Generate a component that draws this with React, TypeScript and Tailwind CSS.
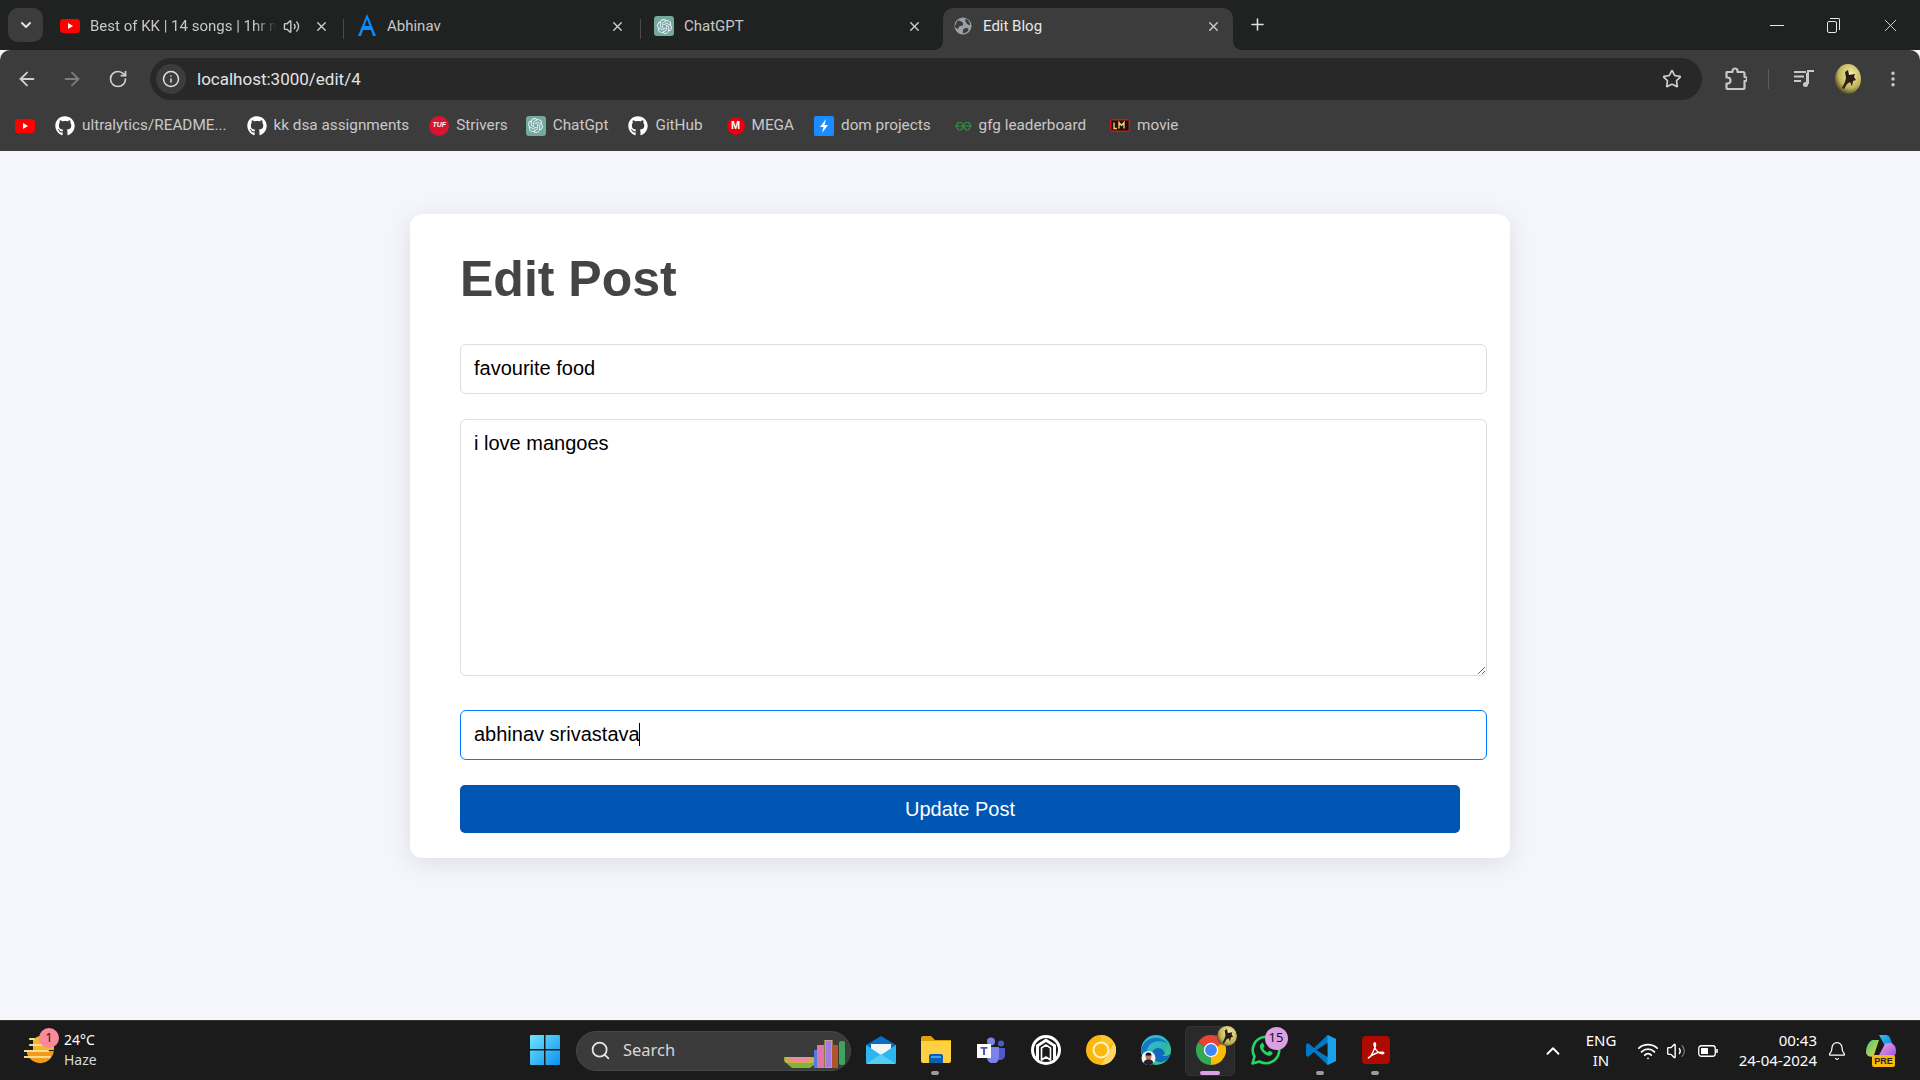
import { ArrowLeft, ArrowRight, RotateCw, Info, Star, EllipsisVertical, Volume1, Volume2, X, Plus, ChevronDown, Search, ChevronUp, Wifi, Bell } from "lucide-react";
import { FaGithub } from "react-icons/fa";
import { SiOpenai } from "react-icons/si";

const Yt = () => (
  <svg viewBox="0 0 20 14" className="w-5 h-[14px] shrink-0">
    <rect width="20" height="14" rx="3.5" fill="#f00" />
    <path d="M8 4l5 3-5 3z" fill="#fff" />
  </svg>
);
const Gpt = () => (
  <div className="w-5 h-5 shrink-0 rounded-[3px] bg-[#74aa9c] flex items-center justify-center text-[#eef]">
    <SiOpenai size={15} />
  </div>
);
const Gh = () => <FaGithub className="w-5 h-5 shrink-0 text-white" />;
const Tuf = () => (
  <div className="w-5 h-5 shrink-0 rounded-full bg-[#d8142f] flex items-center justify-center text-white text-[7px] font-bold italic [font-family:'Liberation_Sans',sans-serif]">TUF</div>
);
const Mega = () => (
  <div className="w-[18px] h-[18px] shrink-0 rounded-full bg-[#e8000f] flex items-center justify-center text-white text-[11px] font-bold [font-family:'Liberation_Sans',sans-serif]">M</div>
);
const Dom = () => (
  <svg viewBox="0 0 20 20" className="w-5 h-5 shrink-0">
    <rect width="20" height="20" rx="1.5" fill="#1a8cff" />
    <path d="M12 3L6 11h3.5L8 17l6-8h-3.5z" fill="#fff" />
  </svg>
);
const Gfg = () => (
  <svg viewBox="0 0 20 12" className="w-[17px] h-[12px] shrink-0" fill="none" stroke="#2f8d46" strokeWidth="1.4">
    <path d="M0 6h20M10 6C9 2 6 1 4 2S1 6 3 9s6 2 7-3zM10 6c1-4 4-5 6-4s3 4 1 7-6 2-7-3z" />
  </svg>
);
const Lm = () => (
  <svg viewBox="0 0 20 13" className="w-5 h-[13px] shrink-0">
    <rect x="0.7" y="0.7" width="18.6" height="11.6" rx="1.5" fill="#1a1208" stroke="#d0141c" strokeWidth="1.4" />
    <path d="M4 3.5v6h3M9 9.5v-6l2.5 3 2.5-3v6" fill="none" stroke="#f0d070" strokeWidth="1.4" />
  </svg>
);
const Avatar = ({ cls }: { cls: string }) => (
  <svg viewBox="0 0 26 30" preserveAspectRatio="xMidYMid slice" className={cls}>
    <defs>
      <radialGradient id="av" cx="0.6" cy="0.35" r="0.7">
        <stop offset="0" stopColor="#f5efa8" />
        <stop offset="0.65" stopColor="#c0b35a" />
        <stop offset="1" stopColor="#3f3a22" />
      </radialGradient>
    </defs>
    <ellipse cx="13" cy="15" rx="13" ry="15" fill="url(#av)" />
    <path d="M10 8l3-2 1 5 6-1-1 3 2 3-3 1-1 5-2-4-3 2-3 5-2-1 3-6 1-4z" fill="#2c1b16" />
  </svg>
);
const PuzzleIcon = () => (
  <svg viewBox="0 0 22 24" className="w-[22px] h-6 shrink-0" fill="none" stroke="#c8c8c8" strokeWidth="2.2" strokeLinejoin="round">
    <path d="M2 5h5.500V4a2.500 2.500 0 0 1 5 0v1H18a1.500 1.500 0 0 1 1.500 1.500V10h.5a2 2 0 0 1 0 4h-.5v6.500A1.500 1.500 0 0 1 18 22H3a1.500 1.500 0 0 1-1.500-1.500V16.500h1a3 3 0 0 0 0-6h-1V6A1 1 0 0 1 2 5z" />
  </svg>
);

function Tab({ icon, title, active, fade, audio }: { icon: React.ReactNode; title: string; active?: boolean; fade?: boolean; audio?: boolean }) {
  return (
    <div className={`relative h-[42px] shrink-0 flex items-center pb-[6px] rounded-t-[10px] ${active ? "w-[290px] ml-[4px] mr-[2px] pl-[10px] pr-[12px] bg-[#3c3c3c] text-[#e8e8e8]" : "w-[297px] pl-3 pr-[17px] text-[#c7c7c7]"}`}>
      {active && <div className="absolute -left-2 bottom-0 w-2 h-2 bg-[radial-gradient(circle_at_0_0,transparent_7.5px,#3c3c3c_8px)]" />}
      {active && <div className="absolute -right-2 bottom-0 w-2 h-2 bg-[radial-gradient(circle_at_100%_0,transparent_7.5px,#3c3c3c_8px)]" />}
      <div className="w-5 flex justify-center shrink-0">{icon}</div>
      <div className={`ml-[10px] flex-1 whitespace-nowrap text-[15px] ${fade ? "[mask-image:linear-gradient(to_right,black_88%,transparent)]" : ""}`}>{title}</div>
      {audio && <Volume2 size={17} className="mr-[14px] ml-[6px] shrink-0 text-[#c7c7c7]" />}
      <X size={15} strokeWidth={2.2} className="shrink-0 text-[#d0d0d0]" />
    </div>
  );
}
const Sep = () => <div className="w-px h-5 bg-[#4a4a4a] shrink-0 -mx-px relative left-[-1px]" />;

function Bm({ icon, label, cls = "" }: { icon: React.ReactNode; label: string; cls?: string }) {
  return (
    <div className={`flex items-center gap-[7px] shrink-0 ${cls}`}>
      {icon}
      <span className="text-[15.3px] text-[#c9c9c9] whitespace-nowrap">{label}</span>
    </div>
  );
}

const Slot = ({ children, dot, active }: { children?: React.ReactNode; dot?: boolean; active?: boolean }) => (
  <div className="relative w-[55px] h-[60px] flex items-center justify-center shrink-0">
    {active && <div className="absolute left-[2px] top-[5px] w-[50px] h-[50px] rounded-[5px] bg-[#2a2a2a] border border-[#333]" />}
    <div className="relative -mt-[2px]">{children}</div>
    {dot && <div className="absolute bottom-[6px] left-[23px] w-2 h-[4px] rounded-full bg-[#9b9b9b]" />}
    {active && <div className="absolute bottom-[6px] left-[17px] w-5 h-[4px] rounded-full bg-[#dca0e4]" />}
  </div>
);

const WinLogo = () => (
  <svg viewBox="0 0 30 30" className="w-[30px] h-[30px]">
    <defs>
      <linearGradient id="w" x1="0" y1="0" x2="1" y2="1">
        <stop offset="0" stopColor="#6fe5fb" />
        <stop offset="1" stopColor="#0d90f2" />
      </linearGradient>
    </defs>
    <path d="M1 0h13v14H0V1a1 1 0 0 1 1-1zM15.500 0H29a1 1 0 0 1 1 1v13H15.500zM0 15.500h14V30H1a1 1 0 0 1-1-1zM15.500 15.500H30V29a1 1 0 0 1-1 1H15.500z" fill="url(#w)" />
  </svg>
);
const Mail = () => (
  <svg viewBox="0 0 30 28" className="w-[30px] h-7">
    <path d="M0 9L15 0l15 9v17a2 2 0 0 1-2 2H2a2 2 0 0 1-2-2z" fill="#0a6cc4" />
    <path d="M5 8h20v8l-10 6-10-6z" fill="#f2f4f6" />
    <path d="M0 9l15 10L30 9v17a2 2 0 0 1-2 2H2a2 2 0 0 1-2-2z" fill="#2eb6ef" />
    <path d="M0 28l15-10 15 10z" fill="#56cdf5" />
  </svg>
);
const Folder = () => (
  <svg viewBox="0 0 30 27" className="w-[30px] h-[27px]">
    <path d="M0 2a2 2 0 0 1 2-2h8l4 4h16v6H0z" fill="#e0a200" />
    <path d="M0 5h30v20a2 2 0 0 1-2 2H2a2 2 0 0 1-2-2z" fill="#ffd044" />
    <path d="M8 27v-7a2 2 0 0 1 2-2h10a2 2 0 0 1 2 2v7z" fill="#0a5fb4" />
    <rect x="10" y="20" width="10" height="2" fill="#39a2ea" />
  </svg>
);
const Teams = () => (
  <svg viewBox="0 0 28 26" className="w-7 h-[26px]">
    <circle cx="14" cy="4.500" r="4" fill="#7b83eb" />
    <circle cx="24" cy="6.500" r="3" fill="#5059c9" />
    <path d="M18 11h10v8a5 5 0 0 1-8 3z" fill="#5059c9" />
    <path d="M9 10h13v10a6 6 0 0 1-12 1z" fill="#7b83eb" />
    <rect x="0" y="7" width="14" height="14" fill="#fff" />
    <path d="M3.500 10h7v1.800H8V18H6v-6.200H3.500z" fill="#4b53bc" />
  </svg>
);
const Ring = () => (
  <svg viewBox="0 0 30 30" className="w-[30px] h-[30px]">
    <circle cx="15" cy="15" r="13.500" fill="#1a1a1a" stroke="#fff" strokeWidth="3" />
    <path d="M15 3.500L25 10v14.500h-3V11.500l-7-4.500-7 4.500v13H5V10z" fill="#fff" />
    <path d="M10.500 13l4.500-3 4.500 3v12l-4.500-3-4.500 3z" fill="#1a1a1a" stroke="#fff" strokeWidth="1.600" strokeLinejoin="round" />
  </svg>
);
const Canary = () => (
  <svg viewBox="0 0 30 30" className="w-[30px] h-[30px]">
    <circle cx="15" cy="15" r="15" fill="#fbb90f" />
    <path d="M15 0A15 15 0 0 1 28 7.500L15 15z" fill="#fcc62f" />
    <path d="M28 7.500A15 15 0 0 1 15 30l7-11z" fill="#fdd663" />
    <circle cx="15" cy="15" r="7.500" fill="#fbb90f" stroke="#fff3c8" strokeWidth="2" />
  </svg>
);
const Edge = () => (
  <svg viewBox="0 0 30 30" className="w-[30px] h-[30px]">
    <defs>
      <linearGradient id="e" x1="0" y1="0" x2="1" y2="1">
        <stop offset="0" stopColor="#35c1f1" />
        <stop offset="0.6" stopColor="#2bb6a8" />
        <stop offset="1" stopColor="#5ad36c" />
      </linearGradient>
    </defs>
    <circle cx="15" cy="15" r="15" fill="url(#e)" />
    <path d="M0 15A15 15 0 0 1 27 9c-8-5-19-3-21 6-1 3 0 7 3 11A15 15 0 0 1 0 15z" fill="#0f6fc4" opacity="0.85" />
    <path d="M30 17c-1 4-7 5-9 3 5 1 3-6-3-7-6 0-8 5-7 8 1 4 6 7 10 6 5-1 9-6 9-10z" fill="#0f6cbd" />
    <circle cx="7.500" cy="23" r="7" fill="#f4f4f4" />
    <path d="M2.500 28c1-3 3-4 5-4s4 1 5 4a7 7 0 0 1-10 0z" fill="#223" />
    <circle cx="7.500" cy="21.500" r="3" fill="#b67d5c" />
    <path d="M4.500 20.500a3 3 0 0 1 6 0z" fill="#111" />
  </svg>
);
const Chrome = () => (
  <div className="relative w-[30px] h-[30px]">
    <svg viewBox="0 0 48 48" className="w-[30px] h-[30px]">
      <path d="M24 24L3.200 12A24 24 0 0 1 44.800 12z" fill="#ea4335" />
      <path d="M24 24L44.800 12A24 24 0 0 1 24 48z" fill="#fbbc04" />
      <path d="M24 24L24 48A24 24 0 0 1 3.200 12z" fill="#34a853" />
      <circle cx="24" cy="24" r="11.500" fill="#fff" />
      <circle cx="24" cy="24" r="9.500" fill="#4285f4" />
    </svg>
    <div className="absolute -top-[9px] -right-[11px] w-5 h-5 rounded-full bg-[#3a3420] overflow-hidden">
      <Avatar cls="w-5 h-5" />
    </div>
  </div>
);
const Whatsapp = () => (
  <div className="relative w-[30px] h-[30px]">
    <svg viewBox="0 0 30 30" className="w-[30px] h-[30px]" fill="none">
      <path d="M1.500 28.500l2-7A13.200 13.200 0 1 1 8.500 26.500z" stroke="#25d366" strokeWidth="2.600" strokeLinejoin="round" />
      <path d="M10.500 8.500c-1.500 1-2 3 -1 5.500 1.500 3 4 5.500 7 6.500 2 .5 4 0 4.800-1.500.5-1 .2-1.700-.3-2l-2.800-1.300-1.500 1.700c-2-.7-3.800-2.500-4.600-4.500l1.400-1.500-1.200-3c-.3-.6-1-.7-1.800-.4z" fill="#25d366" />
    </svg>
    <div className="absolute -top-[8px] -right-[7px] w-[23px] h-[23px] rounded-full bg-[#dca0e4] text-[#111] text-[13px] flex items-center justify-center">15</div>
  </div>
);
const VsCode = () => (
  <svg viewBox="0 0 30 30" className="w-[30px] h-[30px]">
    <path d="M21.500 0L30 4v22l-8.500 4L8 17 2 22l-2-1.500V9.500L2 8l6 5z" fill="#0078c8" />
    <path d="M21.500 0L30 4v22l-8.500 4z" fill="#1ba0ea" />
    <path d="M21.500 8v14L10.500 15z" fill="#1a1a1a" />
  </svg>
);
const Pdf = () => (
  <div className="w-7 h-7 rounded-[4px] bg-[#ad0b00] flex items-center justify-center">
    <svg viewBox="0 0 24 24" className="w-5 h-5" fill="none" stroke="#fff" strokeWidth="1.700" strokeLinejoin="round">
      <path d="M3 21c2 1 5-5 8-13 .6-2 .5-4-.3-4.500-1-.4-1.500 1-.8 3.500 1.500 5 5 9 10 9.500 2 0 2-1.500 0-1.800-5-.5-12 2.500-16.900 6.800z" />
    </svg>
  </div>
);
const Books = () => (
  <svg viewBox="0 0 63 28" className="w-[63px] h-7">
    <path d="M0 17h30v8l-4 3H8l-8-7z" fill="#7cb637" />
    <rect x="1" y="17" width="29" height="6" rx="2" fill="#d7a94f" />
    <rect x="5" y="18" width="20" height="4" rx="2" fill="#e88a9e" />
    <rect x="30" y="10" width="3" height="18" fill="#4a7fe0" />
    <rect x="33" y="5" width="7" height="23" fill="#e274ac" />
    <rect x="41" y="0" width="7" height="28" fill="#a07be0" stroke="#e4c040" strokeWidth="1" />
    <rect x="48" y="5" width="6" height="23" fill="#b0552a" />
    <rect x="55" y="1" width="6" height="24" rx="2" fill="#3fa35e" />
  </svg>
);
const Weather = () => (
  <div className="relative w-[30px] h-[30px]">
    <svg viewBox="0 0 30 30" className="w-[30px] h-[30px]">
      <path d="M3 15h27a14 14 0 0 1-27 3z" fill="#f39a1d" />
      <path d="M9 4a12 12 0 0 1 21 10H9z" fill="#f7b52e" />
      <g stroke="#f7dc8e" strokeWidth="2.200" strokeLinecap="round">
        <path d="M6 3h4M6 9h14M0 15h24M0 21h6M4 21h22" />
      </g>
    </svg>
    <div className="absolute -top-[8px] left-[15px] w-[20px] h-[20px] rounded-full bg-[#fa8a9a] text-[#222] text-[13px] flex items-center justify-center">1</div>
  </div>
);
const Copilot = () => (
  <div className="relative w-[30px] h-[32px]">
    <svg viewBox="0 0 30 24" className="w-[30px] h-6">
      <defs>
        <linearGradient id="c1" x1="0" y1="0" x2="1" y2="1">
          <stop offset="0" stopColor="#25c6f0" />
          <stop offset="1" stopColor="#1757d6" />
        </linearGradient>
        <linearGradient id="c2" x1="0" y1="0" x2="1" y2="1">
          <stop offset="0" stopColor="#f4a8e0" />
          <stop offset="1" stopColor="#9b4fe0" />
        </linearGradient>
        <linearGradient id="c3" x1="0" y1="0" x2="1" y2="1">
          <stop offset="0" stopColor="#3ecb7c" />
          <stop offset="1" stopColor="#f9d33b" />
        </linearGradient>
      </defs>
      <path d="M13 0h7c2 0 3 1 4 3l6 15c-3-5-8-5-10-5z" fill="url(#c1)" />
      <path d="M7 5h6L8 20c-1 3-8 2-8-3 0-6 4-12 7-12z" fill="url(#c3)" />
      <path d="M24 8c3 0 6 3 6 8 0 4-2 6-5 6H12l7-13c1-1 3-1 5-1z" fill="url(#c2)" />
    </svg>
    <div className="absolute bottom-0 left-[6px] w-[23px] h-[12px] rounded-[2px] bg-[#f9b90f] text-[#222] text-[9px] leading-[12px] font-bold text-center [font-family:'Liberation_Sans',sans-serif]">PRE</div>
  </div>
);
const Speaker = () => (
  <div className="relative w-5 h-5 text-white">
    <Volume2 size={20} strokeWidth={1.5} className="absolute text-[#777]" />
    <Volume1 size={20} strokeWidth={1.5} className="absolute" />
  </div>
);
const Battery = () => (
  <svg viewBox="0 0 20 12" className="w-5 h-3" fill="none">
    <rect x="0.750" y="0.750" width="16.500" height="10.500" rx="2.500" stroke="#fff" strokeWidth="1.300" />
    <rect x="3" y="3" width="7" height="6" rx="0.500" fill="#fff" />
    <rect x="18.200" y="4" width="1.600" height="4" rx="0.500" fill="#fff" />
  </svg>
);
const Queue = () => (
  <svg viewBox="0 0 20 18" className="w-5 h-[18px]" fill="none" stroke="#c8c8c8" strokeWidth="2">
    <path d="M0 2h12M0 6.500h10M0 11h7" />
    <path d="M14 14V1h6" />
    <circle cx="11.500" cy="14.500" r="2.500" fill="#c8c8c8" stroke="none" />
    <path d="M13 14.500V3" />
  </svg>
);

const fieldCls = "w-[1027px] h-[50px] shrink-0 block bg-white rounded-[6px] px-[13px] pb-[2px] text-[20px] text-black outline-none caret-transparent";

export default function App() {
  return (
    <div className="w-[1920px] h-screen overflow-hidden flex flex-col bg-[#f4f6fb] [font-family:Roboto,'Noto_Sans',sans-serif]">
      {/* tab strip */}
      <div className="h-[50px] shrink-0 bg-[#202222] flex items-end relative">
        <div className="self-start mt-2 ml-2 w-[35px] h-[34px] rounded-[10px] bg-[#3c3c3c] flex items-center justify-center shrink-0">
          <ChevronDown size={16} strokeWidth={3} className="text-[#e0e0e0]" />
        </div>
        <div className="ml-[5px] flex items-end">
          <Tab icon={<Yt />} title="Best of KK | 14 songs | 1hr n" fade audio />
          <div className="self-center mt-0"><Sep /></div>
          <Tab icon={<svg viewBox="0 0 20 24" className="w-5 h-6"><path d="M10 0L1 22h3l2-6h8l2 6h3zM7.500 12L10 5l2.500 7z" fill="#0a8cff" /></svg>} title="Abhinav" />
          <div className="self-center mt-0"><Sep /></div>
          <Tab icon={<Gpt />} title="ChatGPT" />
          <Tab icon={<svg viewBox="0 0 20 20" className="w-[18px] h-[18px]"><circle cx="10" cy="10" r="9.500" fill="#9aa0a6" /><path d="M4 4c3 0 5 1 6 3s-1 3-3 3-1 3-3 3-3-2-3-3zM13 2c3 1 5 4 5 7-2 0-3-1-4-2s-2-3-1-5zM11 13c2-1 5-1 5 1s-3 4-5 4-1-4 0-5z" fill="#3c3c3c" /></svg>} title="Edit Blog" active />
        </div>
        <Plus size={19} strokeWidth={2} className="self-center -mt-[1px] ml-[13px] text-[#e0e0e0] shrink-0" />
        <div className="absolute right-[19px] top-[15px] flex items-center gap-[43px] text-[#e8e8e8]">
          <div className="w-[14px] h-px bg-[#e8e8e8]" />
          <div className="relative w-[13px] h-[15px]">
            <div className="absolute left-0 bottom-0 w-[10px] h-[12px] border border-[#e8e8e8] rounded-[2px]" />
            <div className="absolute right-0 top-0 w-[10px] h-[12px] border-t border-r border-[#e8e8e8] rounded-tr-[2px]" />
          </div>
          <X size={21} strokeWidth={1} className="-ml-[3px]" />
        </div>
      </div>

      {/* toolbar + bookmarks */}
      <div className="h-[101px] shrink-0 bg-[#3c3c3c] rounded-t-[10px] flex flex-col">
        <div className="h-[58px] flex items-center pl-[16px] shrink-0">
          <ArrowLeft size={22} strokeWidth={2} className="text-[#d0d0d0] shrink-0" />
          <ArrowRight size={22} strokeWidth={2} className="ml-[23px] text-[#7d7d7d] shrink-0" />
          <RotateCw size={20} strokeWidth={2} className="ml-[25px] text-[#d0d0d0] shrink-0" />
          <div className="ml-[22px] w-[1552px] h-[42px] rounded-full bg-[#282828] flex items-center pl-[6px] shrink-0">
            <div className="w-[30px] h-[30px] rounded-full bg-[#3c3c3c] flex items-center justify-center shrink-0">
              <Info size={18} strokeWidth={2} className="text-[#e0e0e0]" />
            </div>
            <span className="ml-[11px] pt-[1px] text-[17px] text-[#e3e3e3]">localhost:3000/edit/4</span>
            <Star size={20} strokeWidth={2} className="ml-auto mr-[20px] text-[#d0d0d0]" />
          </div>
          <div className="ml-[23px] shrink-0"><PuzzleIcon /></div>
          <div className="ml-[21px] w-px h-5 bg-[#5c5c5c] shrink-0" />
          <div className="ml-[25px] shrink-0"><Queue /></div>
          <Avatar cls="ml-[21px] w-[26px] h-[30px] shrink-0" />
          <EllipsisVertical size={20} strokeWidth={2.2} className="ml-[22px] text-[#c8c8c8] shrink-0" />
        </div>
        <div className="flex-1 flex items-center gap-[20px] pl-[15px] pb-[8px]">
          <Yt />
          <Bm icon={<Gh />} label="ultralytics/README..." />
          <Bm icon={<Gh />} label="kk dsa assignments" />
          <Bm icon={<Tuf />} label="Strivers" />
          <Bm icon={<Gpt />} label="ChatGpt" cls="-ml-[2px]" />
          <Bm icon={<Gh />} label="GitHub" />
          <Bm icon={<Mega />} label="MEGA" cls="ml-[4px]" />
          <Bm icon={<Dom />} label="dom projects" />
          <Bm icon={<Gfg />} label="gfg leaderboard" cls="ml-[4px]" />
          <Bm icon={<Lm />} label="movie" cls="ml-[4px]" />
        </div>
      </div>

      {/* page */}
      <main className="flex-1 min-h-0 pt-[63px] [font-family:'Liberation_Sans',Arial,sans-serif]">
        <div className="mx-auto w-[1100px] h-[644px] bg-white rounded-[12px] shadow-[0_5px_25px_rgba(0,0,0,0.1)] px-[50px] flex flex-col">
          <h1 className="mt-[36px] text-[50px] leading-[58px] font-bold text-[#444444]">Edit Post</h1>
          <input readOnly defaultValue="favourite food" className={`mt-[36px] border border-[#dddddd] ${fieldCls}`} />
          <textarea readOnly defaultValue="i love mangoes" className="mt-[25px] w-[1027px] h-[257px] shrink-0 block bg-white rounded-[6px] border border-[#dddddd] px-[13px] py-[11px] text-[20px] leading-[24px] text-black outline-none caret-transparent resize-y" />
          <div className="relative mt-[34px] w-[1027px] shrink-0">
            <input readOnly defaultValue="abhinav srivastava" className={`border border-[#007bff] ${fieldCls}`} />
            <div className="absolute left-[179px] top-[13px] w-px h-[23px] bg-black" />
          </div>
          <button className="mt-[25px] w-[1000px] h-[48px] pb-[1px] shrink-0 rounded-[5px] bg-[#0056b3] text-white text-[20px]">Update Post</button>
        </div>
      </main>

      {/* taskbar */}
      <div className="h-[60px] shrink-0 bg-[#1b1b1b] border-t border-[#333] flex items-center text-white [font-family:'Noto_Sans',Roboto,sans-serif]">
        <div className="w-[517px] shrink-0 flex items-center pl-[24px]">
          <Weather />
          <div className="ml-[10px] pb-[2px] flex flex-col text-[14px] leading-[20px]">
            <span>24°C</span>
            <span className="text-[#d8d8d8]">Haze</span>
          </div>
        </div>
        <Slot><WinLogo /></Slot>
        <div className="ml-[4px] w-[275px] h-[40px] rounded-full bg-[#3b3b3b] border border-[#474747] flex items-center pl-[13px] relative shrink-0">
          <Search size={21} strokeWidth={2} className="text-[#e6e6e6]" />
          <span className="ml-[12px] text-[16.5px] text-[#d8d8d8]">Search</span>
          <div className="absolute right-[3px] top-[8px]"><Books /></div>
        </div>
        <div className="ml-[2px] flex items-center">
          <Slot><Mail /></Slot>
          <Slot dot><Folder /></Slot>
          <Slot><Teams /></Slot>
          <Slot><Ring /></Slot>
          <Slot><Canary /></Slot>
          <Slot><Edge /></Slot>
          <Slot active><Chrome /></Slot>
          <Slot><Whatsapp /></Slot>
          <Slot dot><VsCode /></Slot>
          <Slot dot><Pdf /></Slot>
        </div>
        <div className="flex-1 flex items-center min-w-0">
          <ChevronUp size={22} strokeWidth={2} className="ml-[139px] text-white shrink-0" />
          <div className="ml-[11px] pb-[2px] w-[52px] text-center text-[15px] leading-[20px] shrink-0"><div>ENG</div><div>IN</div></div>
          <Wifi size={22} strokeWidth={2} className="ml-[10px] shrink-0" />
          <div className="ml-[7px] shrink-0"><Speaker /></div>
          <div className="ml-[12px] shrink-0"><Battery /></div>
          <div className="ml-[20px] pb-[2px] w-[79px] text-right text-[15px] leading-[20px] shrink-0 whitespace-nowrap"><div>00:43</div><div>24-04-2024</div></div>
          <Bell size={20} strokeWidth={1.5} className="ml-[10px] shrink-0" />
          <div className="ml-[19px] shrink-0"><Copilot /></div>
        </div>
      </div>
    </div>
  );
}
